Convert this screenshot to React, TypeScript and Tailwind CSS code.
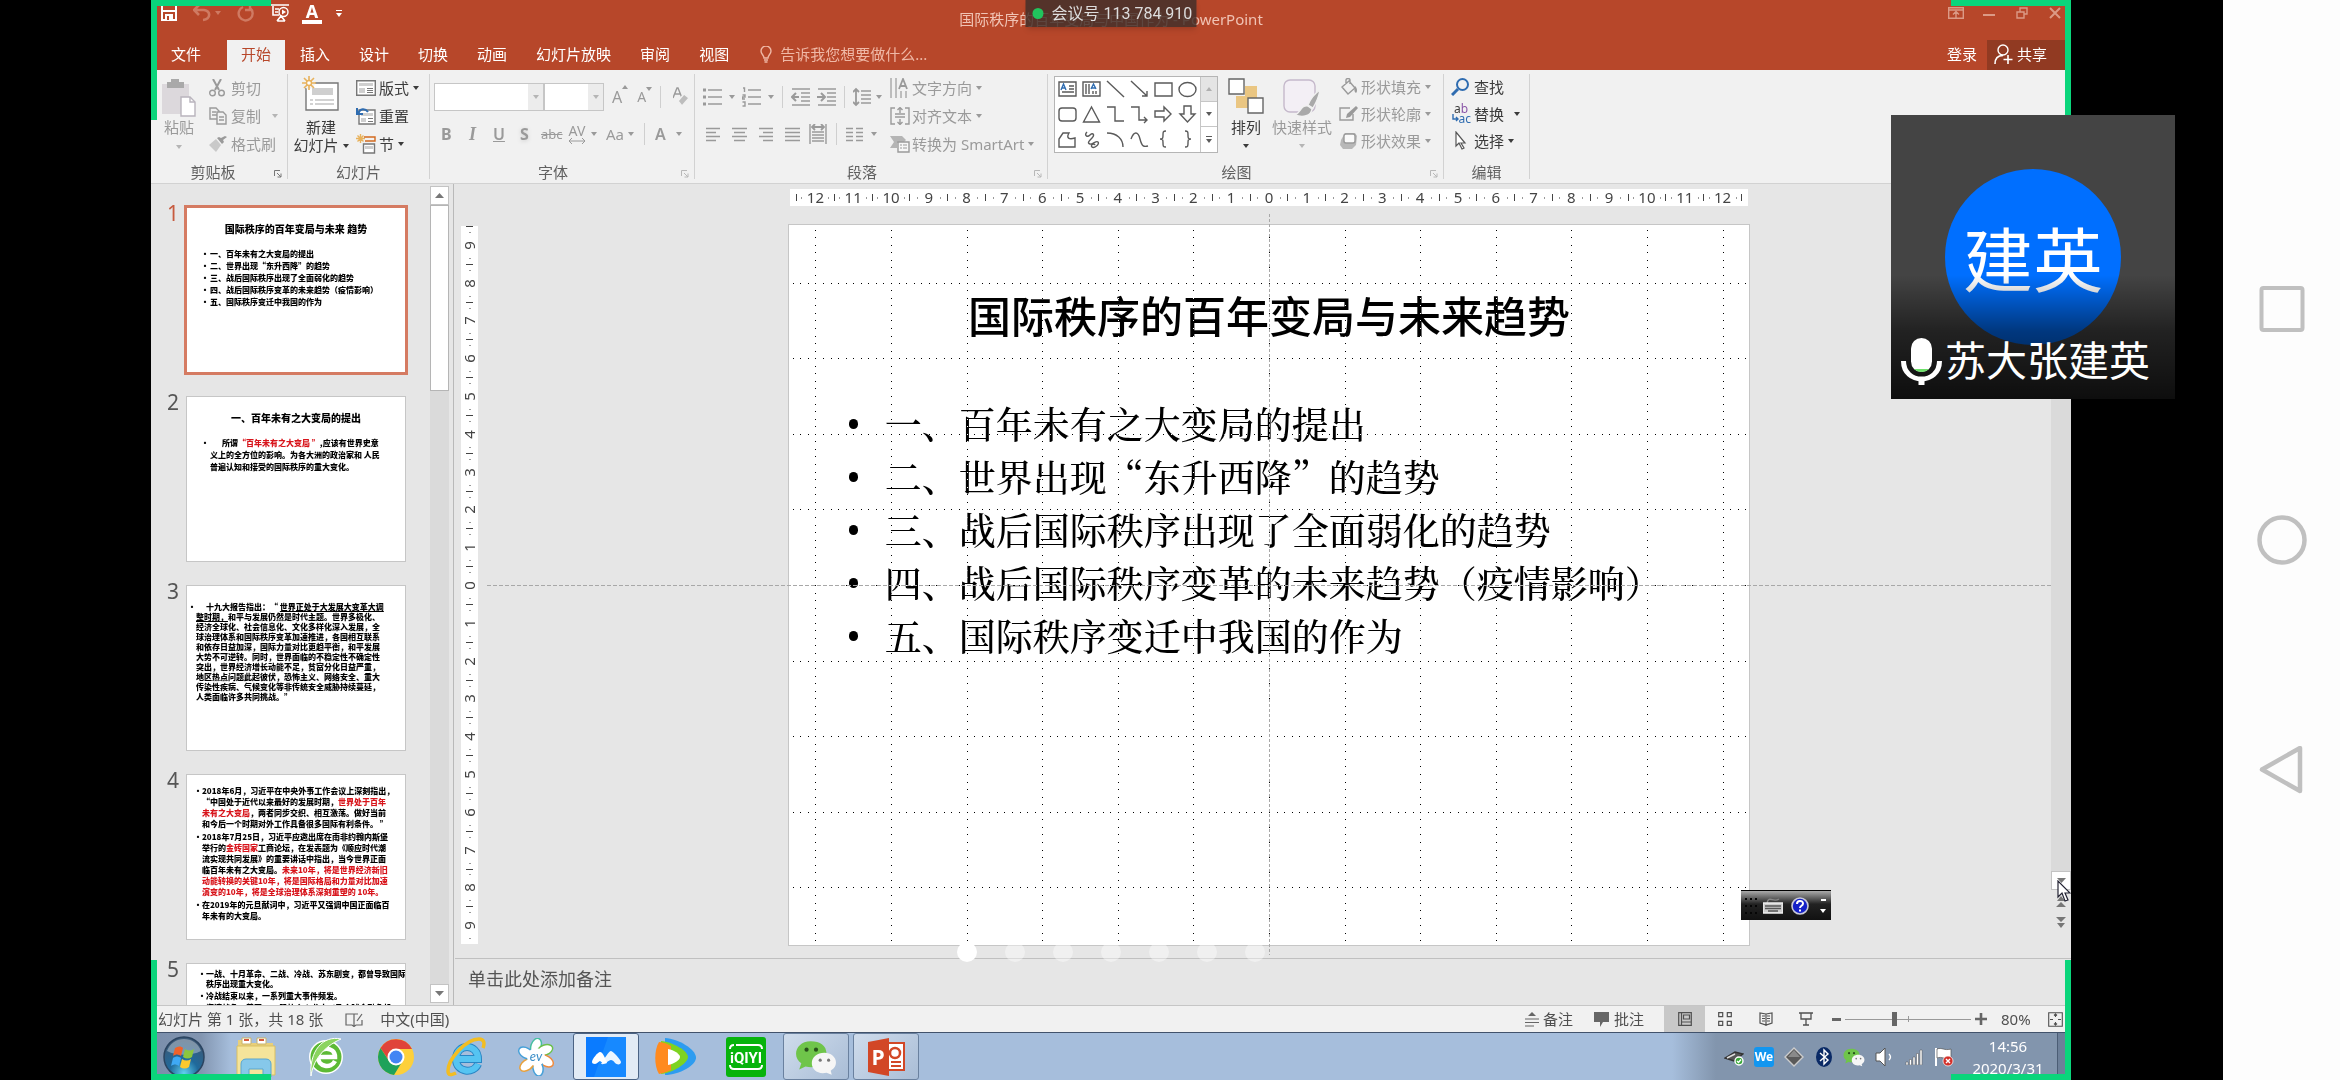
import { type ReactNode, useState } from 'react'

const UI_FONT = "font-['Noto_Sans','Noto_Sans_CJK_SC',sans-serif]"
const CJK_FONT = "font-['Noto_Sans_CJK_SC',sans-serif]"

function Svg({ w, h, className, children }: { w: number; h: number; className?: string; children: ReactNode }) {
  return (
    <svg
      width={w}
      height={h}
      viewBox={`0 0 ${w} ${h}`}
      fill="none"
      stroke="currentColor"
      strokeWidth={1.4}
      className={`shrink-0 ${className ?? ''}`}
      aria-hidden
    >
      {children}
    </svg>
  )
}

function Caret({ className = '' }: { className?: string }) {
  return (
    <Svg w={6} h={4} className={className}>
      <path d="M0 0h6L3 4z" fill="currentColor" stroke="none" />
    </Svg>
  )
}

/* ---------- title bar and tabs ---------- */

function TitleBar() {
  return (
    <div className="grid h-10 grid-cols-[1fr_auto_1fr] text-white">
      <div className="flex h-[26px] items-center pl-[10px]">
        <button aria-label="保存" className="w-4">
          <Svg w={16} h={16}>
            <path d="M1 0v15h14V0M1 6h14" strokeWidth={2} />
            <path d="M4 9h8v6H4z" fill="currentColor" stroke="none" />
            <path d="M6 11h2v4H6z" fill="#B7472A" stroke="none" />
          </Svg>
        </button>
        <button aria-label="撤消" className="ml-4 flex items-center gap-1 text-[#cf7a62]">
          <Svg w={18} h={18}>
            <path d="M6 1 1 6l5 5M1 6h10c7 1 7 9-1 10" strokeWidth={2.6} />
          </Svg>
          <Caret />
        </button>
        <button aria-label="恢复" className="ml-4 text-[#cf7a62]">
          <Svg w={18} h={18}>
            <path d="M6 3a7 7 0 1 0 7 1M13 0v6h-5" strokeWidth={2.4} />
          </Svg>
        </button>
        <button aria-label="从头开始放映" className="ml-4">
          <Svg w={18} h={20}>
            <path d="M0 2h18M2 3v9h6M4 6h4M4 9h3M6 18l4-5 4 5M6 18h8" strokeWidth={1.6} />
            <circle cx="12.5" cy="9" r="4.5" />
            <path d="M11 6.5v5l4-2.5z" fill="currentColor" stroke="none" />
          </Svg>
        </button>
        <button aria-label="字体颜色" className="ml-[13px] flex flex-col items-center">
          <span className="text-lg font-bold leading-[18px]">A</span>
          <span className="h-1 w-5 bg-white" />
        </button>
        <button aria-label="自定义快速访问工具栏" className="ml-[14px] flex flex-col items-center gap-[2px]">
          <span className="h-px w-[6px] bg-white" />
          <Caret />
        </button>
      </div>
      <h1 className="self-center whitespace-nowrap pb-[2px] text-[15px] leading-5 text-[#f0c3b4]">
        国际秩序的百年变局与中国作为 - PowerPoint
      </h1>
      <div className="flex h-[26px] items-center justify-end text-[#db9a86]">
        <button aria-label="功能区显示选项" className="flex w-[33px] justify-center">
          <Svg w={16} h={12}>
            <path d="M.7.7h14.6v10.6H.7zM.7 3h14.6M8 11V5M5 7.500l3-3 3 3" />
          </Svg>
        </button>
        <button aria-label="最小化" className="flex w-[33px] justify-center">
          <Svg w={12} h={12}><path d="M0 8h12" strokeWidth={2} /></Svg>
        </button>
        <button aria-label="还原" className="flex w-[33px] justify-center">
          <Svg w={12} h={12}><path d="M1 5h7v6H1zM4 5V1h7v6H8" /></Svg>
        </button>
        <button aria-label="关闭" className="flex w-[33px] justify-center">
          <Svg w={12} h={12}><path d="m1 1 10 10M11 1 1 11" strokeWidth={2} /></Svg>
        </button>
      </div>
    </div>
  )
}

const TABS = ['文件', '开始', '插入', '设计', '切换', '动画', '幻灯片放映', '审阅', '视图']

function TabRow() {
  const [active, setActive] = useState('开始')
  return (
    <div className="flex h-[30px] items-stretch text-[15px] text-white">
      <nav className="flex gap-px">
        {TABS.map((t) => (
          <button
            key={t}
            onClick={() => setActive(t)}
            className={`px-[14px] pb-[2px] leading-7 ${t === '文件' ? 'ml-[6px] mr-[11px]' : ''} ${
              t === active ? 'bg-[#f1f1f1] text-[#b7472a]' : ''
            }`}
          >
            {t}
          </button>
        ))}
      </nav>
      <label className="ml-[17px] flex items-center gap-2 pb-[2px] text-[#efb8a6]">
        <Svg w={12} h={17}>
          <path d="M4 12c0-3-3-3.500-3-7a5 5 0 0 1 10 0c0 3.500-3 4-3 7zM4 14h4M4.500 16h3" />
        </Svg>
        <input
          placeholder="告诉我您想要做什么..."
          className="w-40 bg-transparent leading-7 outline-none placeholder:text-[#efb8a6]"
        />
      </label>
      <div className="ml-auto flex">
        <button className="px-[10px] pb-[2px] leading-7">登录</button>
        <button className="flex w-[84px] items-center gap-1 bg-[#913a22] pb-[2px] pl-[7px]">
          <Svg w={19} h={20}>
            <circle cx="9" cy="6" r="5" />
            <path d="M1 20c0-6 3-8.500 8-8.500M14 11v9M9.500 15.500h9" strokeWidth={1.6} />
          </Svg>
          <span className="leading-7">共享</span>
        </button>
      </div>
    </div>
  )
}

/* ---------- ribbon ---------- */

function Group({ label, launcher, dim = true, className, children }: {
  label: string
  launcher?: boolean
  dim?: boolean
  className: string
  children: ReactNode
}) {
  return (
    <section className={`my-1 flex shrink-0 flex-col border-r border-[#d2d2d2] ${className}`}>
      <div className="flex h-[84px] shrink-0">{children}</div>
      <div className={`relative shrink-0 text-center leading-7 text-[#606060] ${launcher ? 'pr-[18px]' : ''}`}>
        {label}
        {launcher && (
          <button aria-label={`${label}选项`} className={`absolute right-[5px] top-3 ${dim ? 'text-[#b8b8b8]' : 'text-[#777]'}`}>
            <Svg w={8} h={8}>
              <path d="M.5 6V.5H6M3 3l4 4M7 3.500V7H3.500" strokeWidth={1} />
            </Svg>
          </button>
        )}
      </div>
    </section>
  )
}

function RowButton({ icon, label, caret, className = '' }: {
  icon: ReactNode
  label: string
  caret?: string
  className?: string
}) {
  return (
    <button className={`flex items-center whitespace-nowrap ${className}`}>
      {icon}
      <span className="leading-7">{label}</span>
      {caret && <Caret className={caret} />}
    </button>
  )
}

function Sep() {
  return <span className="h-[22px] w-px shrink-0 bg-[#cfcfcf]" />
}

function Lines({ rows }: { rows: [number, number][] }) {
  return <path d={rows.map(([x, w], i) => `M${x} ${i * 4 + 1.5}h${w}`).join('')} strokeWidth={1.3} />
}

function ClipboardGroup() {
  return (
    <Group label="剪贴板" launcher dim={false} className="w-[137px] pl-[6px] text-[#9a9a9a]">
      <button className="ml-px flex w-[42px] flex-col items-center pt-[5px]">
        <Svg w={36} h={38}>
          <path d="M1 5h27v30H1z" fill="#dcd8dc" stroke="none" />
          <path d="M6 3h4V0h8v3h5v6H6z" fill="#a9a9a9" stroke="none" />
          <path d="M20 18h9l5 5v14H20z" fill="#fff" stroke="#b9b4bd" />
          <path d="M29 18v5h5" stroke="#b9b4bd" />
        </Svg>
        <span className="leading-5">粘贴</span>
        <Caret className="mt-2 text-[#b5b5b5]" />
      </button>
      <div className="ml-[9px] grid grid-rows-3">
        <RowButton
          label="剪切"
          icon={
            <Svg w={16} h={18} className="mr-[6px]">
              <path d="M4 0l6 11M12 0 6 11" strokeWidth={2} />
              <circle cx="3.500" cy="14" r="2.800" />
              <circle cx="12.500" cy="14" r="2.800" />
            </Svg>
          }
        />
        <RowButton
          label="复制"
          caret="ml-[11px] text-[#b5b5b5]"
          icon={
            <Svg w={18} h={18} className="mr-1">
              <path d="M1 1h6l3 3v8H1zM3 5h4M3 8h5" />
              <path d="M8 5h6l3 3v9H8z" fill="#f1f1f1" />
              <path d="M10 10h5M10 13h5" />
            </Svg>
          }
        />
        <RowButton
          label="格式刷"
          icon={
            <Svg w={18} h={16} className="mr-1">
              <path d="m0 9 7-6 5 6-5 7z" fill="#c9c9c9" stroke="none" />
              <path d="m8 2 5 6 2-2-1-2 4-3-2-1-4 2-2-1z" fill="currentColor" stroke="none" />
            </Svg>
          }
        />
      </div>
    </Group>
  )
}

function Burst() {
  return (
    <path d="M7 0v14M0 7h14M2 2l10 10M12 2 2 12" stroke="#e8b25c" strokeWidth={1.6} />
  )
}

function SlidesGroup() {
  return (
    <Group label="幻灯片" className="w-[142px] text-[#3b3b3b]">
      <button className="ml-[5px] flex w-[56px] flex-col items-center pt-[2px]">
        <Svg w={38} h={36}>
          <path d="M4 7h32v27H4z" fill="#fff" stroke="#777" />
          <path d="M10 12h21v7H10z" fill="#cfcfcf" stroke="none" />
          <path d="M8 24h3M13 24h19M8 28h3M13 28h19" stroke="#a5a5a5" strokeWidth={1} />
          <circle cx="7" cy="7" r="6" fill="#f1f1f1" stroke="none" />
          <Burst />
          <circle cx="7" cy="7" r="2.500" fill="#fff" stroke="#e8b25c" />
        </Svg>
        <span className="mt-[6px] leading-[18px]">新建</span>
        <span className="flex items-center gap-1 leading-[19px]">
          幻灯片 <Caret />
        </span>
      </button>
      <div className="ml-[7px] grid grid-rows-3">
        <RowButton
          label="版式"
          caret="ml-1"
          icon={
            <Svg w={20} h={16} className="mr-[3px] text-[#777]">
              <path d="M.7.7h18.600v14.600H.7z" fill="#fff" />
              <path d="M3 3h14v3H3zM3 8h6v5H3z" fill="#cfcfcf" stroke="none" />
              <path d="M11 8.500h6M11 10.500h6M11 12.500h6" strokeWidth={1} />
            </Svg>
          }
        />
        <RowButton
          label="重置"
          icon={
            <Svg w={20} h={18} className="mr-[3px] text-[#777]">
              <path d="M3 3h16v14H3z" fill="#fff" />
              <path d="M5 6h12v3H5zM5 11h5v4H5z" fill="#cfcfcf" stroke="none" />
              <path d="M12 11.500h5M12 14.500h5" strokeWidth={1} />
              <path d="M2 7c2-6 7-6 10-2M1 1v6h6" stroke="#2f6cb0" strokeWidth={2} />
            </Svg>
          }
        />
        <RowButton
          label="节"
          caret="ml-1"
          icon={
            <Svg w={20} h={20} className="mr-[3px]">
              <path d="M4.500 0v9M0 4.500h9M1.500 1.500l6 6M7.500 1.500l-6 6" stroke="#e8b25c" />
              <path d="M8 3h11v4H9" stroke="#d2691e" />
              <path d="M7.500 10h11v9h-11z" fill="#fff" stroke="#777" />
              <path d="M9 12h8v3H9z" fill="#cfcfcf" stroke="none" />
            </Svg>
          }
        />
      </div>
    </Group>
  )
}

function Combo({ label, className }: { label: string; className: string }) {
  return (
    <span className={`relative flex h-7 border border-[#c6c6c6] bg-white ${className}`}>
      <select aria-label={label} className="w-full appearance-none bg-transparent" />
      <span className="pointer-events-none absolute inset-y-0 right-0 flex w-[15px] items-center justify-center bg-[#ececec]">
        <Caret className="text-[#b5b5b5]" />
      </span>
    </span>
  )
}

function FontGroup() {
  return (
    <Group label="字体" launcher className="w-[265px] text-[#9a9a9a]">
      <div className="flex flex-col pl-1 pt-[9px]">
        <div className="flex h-7 items-center">
          <Combo label="字体" className="w-[110px]" />
          <Combo label="字号" className="w-[60px]" />
          <button aria-label="增大字号" className="ml-2 flex items-start leading-6">
            <span className="text-base">A</span>
            <Caret className="rotate-180" />
          </button>
          <button aria-label="减小字号" className="ml-[9px] flex items-start leading-6">
            <span className="text-sm">A</span>
            <Caret />
          </button>
          <span className="ml-[8px] mr-3 flex"><Sep /></span>
          <button aria-label="清除格式">
            <Svg w={16} h={20}>
              <path d="M0 11 4 1h1l4 10M2 7h5" />
              <path d="m5 14 6-7 5 4-7 8z" fill="#bdbdbd" stroke="#f1f1f1" />
            </Svg>
          </button>
        </div>
        <div className="mt-[9px] flex h-7 items-center pl-[7px] text-base leading-6">
          <button className="w-[28px] text-left font-bold">B</button>
          <button className="w-[24px] text-left font-['Liberation_Serif',serif] text-[18px] font-bold italic">I</button>
          <button className="w-[27px] text-left font-semibold underline">U</button>
          <button className="w-[21px] text-left font-bold drop-shadow-sm">S</button>
          <button className="w-[27px] text-left text-[13px] line-through">abc</button>
          <button aria-label="字符间距" className="flex w-[38px] items-center gap-[5px]">
            <span className="flex flex-col items-center">
              <span className="text-sm leading-[14px]">AV</span>
              <Svg w={18} h={6}>
                <path d="M1 3h16M4 0 1 3l3 3M14 0l3 3-3 3" strokeWidth={1} />
              </Svg>
            </span>
            <Caret />
          </button>
          <button className="flex w-[38px] items-center gap-1 text-[15px]">
            Aa <Caret />
          </button>
          <Sep />
          <button className="ml-[10px] flex items-center gap-[10px] font-semibold">
            A <Caret />
          </button>
        </div>
      </div>
    </Group>
  )
}

function ParagraphGroup() {
  return (
    <Group label="段落" launcher className="w-[353px] text-[#9a9a9a]">
      <div className="w-[195px] pl-2 pt-[9px]">
        <div className="flex h-7 items-center">
          <Svg w={19} h={20}>
            <path d="M5 3h14M5 10h14M5 17h14" />
            <path d="M0 3h3M0 10h3M0 17h3" strokeWidth={3} />
          </Svg>
          <Caret className="ml-[7px] mr-[7px]" />
          <Svg w={19} h={20}>
            <path d="M6 3h13M6 10h13M6 17h13M1 1h1.500v4M.5 8h2.500v2H.5v2H3M.5 15h2.500v4H.5" />
          </Svg>
          <Caret className="ml-[7px] mr-2" />
          <Sep />
          <Svg w={19} h={18} className="ml-2">
            <path d="M1 1h18M10 5h9M10 9h9M10 13h9M1 17h18" />
            <path d="M8 9H2M5 5 1 9l4 4" strokeWidth={2} />
          </Svg>
          <Svg w={19} h={18} className="ml-[7px]">
            <path d="M1 1h18M10 5h9M10 9h9M10 13h9M1 17h18" />
            <path d="M0 9h7M4 5l4 4-4 4" strokeWidth={2} />
          </Svg>
          <span className="mx-2 flex"><Sep /></span>
          <Svg w={18} h={20}>
            <path d="M8 4h10M8 8h10M8 12h10M8 16h10" />
            <path d="M3 2v16M0 5l3-3 3 3M0 15l3 3 3-3" strokeWidth={1.8} />
          </Svg>
          <Caret className="ml-[5px]" />
        </div>
        <div className="mt-[9px] flex h-7 items-center gap-3 pl-[3px]">
          <Svg w={14} h={15}><Lines rows={[[0, 14], [0, 10], [0, 14], [0, 10]]} /></Svg>
          <Svg w={15} h={15}><Lines rows={[[0, 15], [2, 11], [0, 15], [2, 11]]} /></Svg>
          <Svg w={14} h={15}><Lines rows={[[0, 14], [4, 10], [0, 14], [4, 10]]} /></Svg>
          <Svg w={15} h={15}><Lines rows={[[0, 15], [0, 15], [0, 15], [0, 15]]} /></Svg>
          <Svg w={18} h={20} className="-mx-[3px]">
            <path d="M1 0v20M17 0v20M3 8h12M3 11h12M3 14h12M3 17h12" />
            <path d="M3 3h12M6 0 3 3l3 3M12 0l3 3-3 3" strokeWidth={1.8} />
          </Svg>
          <span className="-mr-[3px] flex"><Sep /></span>
          <Svg w={17} h={15}>
            <path d="M0 1.500h7M10 1.500h7M0 5.500h7M10 5.500h7M0 9.500h7M10 9.500h7M0 13.500h7M10 13.500h7" />
          </Svg>
          <Caret className="-ml-1" />
        </div>
      </div>
      <div className="grid grid-rows-3">
        <RowButton
          label="文字方向"
          caret="ml-1"
          icon={
            <Svg w={18} h={20} className="mr-1">
              <path d="M1 0v20M6 0v20M11 13v7M16 13v7" strokeWidth={1.2} />
              <path d="m9 11 4-10 4 10M10.500 8h5" strokeWidth={1.800} />
            </Svg>
          }
        />
        <RowButton
          label="对齐文本"
          caret="ml-1"
          icon={
            <Svg w={20} h={18} className="mr-[2px]">
              <path d="M5 1H1v16h4M15 1h4v16h-4M5 7h10M5 10h10" />
              <path d="M10 0v6M7.500 3 10 .5 12.500 3M10 18v-6M7.500 15l2.500 2.500 2.500-2.500" />
            </Svg>
          }
        />
        <RowButton
          label="转换为 SmartArt"
          caret="ml-1"
          icon={
            <Svg w={20} h={18} className="mr-[2px]">
              <path d="M0 1h12l4 4-3 3H7v5H0l4-6z" fill="#b5b5b5" stroke="none" />
              <path d="M8 7h11v10H8z" fill="#f7f7f7" />
              <path d="M10 10h2M13 10h4M10 13h2M13 13h4" strokeWidth={1} />
            </Svg>
          }
        />
      </div>
    </Group>
  )
}

const SHAPES: ReactNode[] = [
  <><path d="M1 2h17v14H1zM11 6h5M11 9h5M4 12h12" /><path d="m3 10 2.500-6L8 10M4 8h3" stroke="#2f6cb0" /></>,
  <><path d="M1 2h17v14H1zM4 4v10M7 4v10M11 11v3M14 11v3" /><path d="m9 9 2.500-5L14 9M10 8h3" stroke="#2f6cb0" /></>,
  <path d="m1 1 17 16" />,
  <path d="m1 1 16 15M17 11v5h-5" />,
  <path d="M1 3h17v13H1z" />,
  <ellipse cx="9.500" cy="9.500" rx="8.500" ry="7" />,
  <rect x="1" y="3" width="17" height="13" rx="3" />,
  <path d="M9.500 2 1.500 17h16z" />,
  <path d="M1 2h8v14h9" />,
  <path d="M1 2h8v13h8M14 12l3 3-3 3" />,
  <path d="M1 6h9V2l7 7-7 7v-4H1z" />,
  <path d="M6 1h7v8h4l-7.500 8L2 9h4z" />,
  <path d="M5 3h6c-3 5 0 7 6 5v9H1V9z" />,
  <path d="M5 2c-3 3 0 6 3 3s5 0 2 3-5 5-2 6 6-4 8-2-4 7-6 5 2-4 3-2" />,
  <path d="M1 3c10 0 16 6 16 14" />,
  <path d="M1 9c3-8 7-8 9 0s4 8 8 7" />,
  <path d="M12 1c-3 0-3 1-3 4s0 4-3 4c3 0 3 1 3 4s0 4 3 4" />,
  <path d="M7 1c3 0 3 1 3 4s0 4 3 4c-3 0-3 1-3 4s0 4-3 4" />,
]

function DrawingGroup() {
  return (
    <Group label="绘图" launcher className="w-[396px] text-[#9a9a9a]">
      <div className="ml-[6px] mt-[2px] flex h-[77px] w-[164px] border border-[#b5b5b5] bg-white text-[#5a5a5a]">
        <div className="grid flex-1 grid-cols-6 grid-rows-3 place-items-center">
          {SHAPES.map((s, i) => (
            <Svg key={i} w={19} h={19}>{s}</Svg>
          ))}
        </div>
        <div className="grid w-[17px] grid-rows-3 divide-y divide-[#c6c6c6] border-l border-[#c6c6c6]">
          <button aria-label="上一行" className="flex items-center justify-center bg-[#e4e4e4] text-[#b0b0b0]">
            <Caret className="rotate-180" />
          </button>
          <button aria-label="下一行" className="flex items-center justify-center"><Caret /></button>
          <button aria-label="其他" className="flex flex-col items-center justify-center gap-[2px]">
            <span className="h-px w-[6px] bg-[#5a5a5a]" />
            <Caret />
          </button>
        </div>
      </div>
      <button className="ml-[9px] flex w-[38px] flex-col items-center pt-1 text-[#3b3b3b]">
        <Svg w={36} h={36}>
          <path d="M17 8h12v12H17zM8 18h12v12H8z" fill="#eac682" stroke="none" />
          <path d="M1 1h15v15H1zM20 20h15v15H20z" fill="#fff" stroke="#666" />
        </Svg>
        <span className="mt-1 whitespace-nowrap leading-[18px]">排列</span>
        <Caret className="mt-2" />
      </button>
      <button className="ml-[6px] flex w-[62px] flex-col items-center pt-[5px]">
        <Svg w={38} h={39}>
          <rect x="1" y="1" width="31" height="32" rx="6" fill="#f3eff5" stroke="#c5b9cb" />
          <path d="M37 11c-6 4-10 10-12 15l5 3c3-5 6-12 7-18z" fill="#a9a9a9" stroke="#f1f1f1" />
          <path d="M25 27c-8-1-7 7-13 9 8 3 16 1 17-6z" fill="#a9a9a9" stroke="#f1f1f1" />
        </Svg>
        <span className="leading-[18px]">快速样式</span>
        <Caret className="mt-2 text-[#b5b5b5]" />
      </button>
      <div className="ml-[6px] grid h-[80px] grid-rows-3">
        <RowButton
          label="形状填充"
          caret="ml-1"
          icon={
            <Svg w={19} h={18} className="mr-[3px]">
              <path d="m3 9 7-6 6 7-7 6zM7 6V2c0-2 4-2 4 0v4" />
              <path d="M16 8c3 3 2 6 1 7-2-1-2-4-1-7z" fill="currentColor" stroke="none" />
            </Svg>
          }
        />
        <RowButton
          label="形状轮廓"
          caret="ml-1"
          icon={
            <Svg w={19} h={18} className="mr-[3px]">
              <path d="M11 3H1v12h13V9" />
              <path d="m7 13 1-4 9-8 2 2-8 9z" fill="currentColor" stroke="none" />
            </Svg>
          }
        />
        <RowButton
          label="形状效果"
          caret="ml-1"
          icon={
            <Svg w={19} h={18} className="mr-[3px]">
              <path d="M6 1h10l2 3-1 9-4 4H4l-3-4 1-5z" fill="#b8b8b8" stroke="none" />
              <rect x="5" y="2" width="11" height="9" rx="2" fill="#fafafa" />
            </Svg>
          }
        />
      </div>
    </Group>
  )
}

function EditingGroup() {
  return (
    <Group label="编辑" className="w-[86px] text-[#3b3b3b]">
      <div className="ml-[7px] grid h-[80px] grid-rows-3">
        <RowButton
          label="查找"
          icon={
            <Svg w={18} h={18} className="mr-[5px] text-[#2f6cb0]">
              <circle cx="11.500" cy="6.500" r="5.500" strokeWidth={2} />
              <path d="m7 11-6 6" strokeWidth={3} />
            </Svg>
          }
        />
        <RowButton
          label="替换"
          caret="ml-[10px]"
          icon={
            <span className="mr-[3px] flex w-5 flex-col text-[12px] leading-[10px]">
              <span>a<b className="font-normal text-[#8a55a8]">b</b></span>
              <span className="flex justify-end text-[#2f6cb0]"><Svg w={7} h={8}><path d="M1 0v5h5M4 3l2 2-2 2" /></Svg>ac</span>
            </span>
          }
        />
        <RowButton
          label="选择"
          caret="ml-1"
          icon={
            <Svg w={18} h={19} className="mr-[5px] text-[#555]">
              <path d="M5 1v14l3-3 3 6 2-1-3-5h4z" fill="#fff" strokeWidth={1.2} />
            </Svg>
          }
        />
      </div>
    </Group>
  )
}

function Ribbon() {
  return (
    <div className="flex h-[114px] overflow-hidden border-b border-[#d2d2d2] bg-[#f1f1f1] text-[15px]">
      <ClipboardGroup />
      <SlidesGroup />
      <FontGroup />
      <ParagraphGroup />
      <DrawingGroup />
      <EditingGroup />
    </div>
  )
}

/* ---------- thumbnails ---------- */

interface Thumb {
  title?: string
  box: string
  item: string
  bullets: ReactNode[][]
}

const red = (s: string) => <span className="text-[#d8141b]">{s}</span>

const OUTLINE = [
  '一、百年未有之大变局的提出',
  '二、世界出现“东升西降”的趋势',
  '三、战后国际秩序出现了全面弱化的趋势',
  '四、战后国际秩序变革的未来趋势（疫情影响）',
  '五、国际秩序变迁中我国的作为',
]

const THUMBS: Thumb[] = [
  {
    title: '国际秩序的百年变局与未来 趋势',
    box: 'pt-[14px] leading-[12px]',
    item: 'pl-[14px] gap-[7px]',
    bullets: OUTLINE.map((t) => [t]),
  },
  {
    title: '一、百年未有之大变局的提出',
    box: 'pt-[14px] leading-[12px]',
    item: 'pl-[14px] gap-[7px]',
    bullets: [[
      <span className="pl-3">所谓{red('“百年未有之大变局 ”')},应该有世界史意</span>,
      '义上的全方位的影响。为各大洲的政治家和 人民',
      '普遍认知和接受的国际秩序的重大变化。',
    ]],
  },
  {
    box: 'pt-4 leading-[10px]',
    item: 'pl-px gap-[6px]',
    bullets: [[
      <span className="pl-[10px]">十九大报告指出：“ <u>世界正处于大发展大变革大调</u></span>,
      <><u>整时期，</u>和平与发展仍然是时代主题。世界多极化、</>,
      '经济全球化、社会信息化、文化多样化深入发展，全',
      '球治理体系和国际秩序变革加速推进，各国相互联系',
      '和依存日益加深，国际力量对比更趋平衡，和平发展',
      '大势不可逆转。同时，世界面临的不稳定性不确定性',
      '突出，世界经济增长动能不足，贫富分化日益严重，',
      '地区热点问题此起彼伏，恐怖主义、网络安全、重大',
      '传染性疾病、气候变化等非传统安全威胁持续蔓延，',
      '人类面临许多共同挑战。”',
    ]],
  },
  {
    box: 'pt-[10px] leading-[11px]',
    item: 'pl-[7px] gap-[6px] mb-[2px]',
    bullets: [
      [
        '2018年6月，习近平在中央外事工作会议上深刻指出，',
        <>“中国处于近代以来最好的发展时期，{red('世界处于百年')}</>,
        <>{red('未有之大变局')}，两者同步交织、相互激荡。做好当前</>,
        '和今后一个时期对外工作具备很多国际有利条件。 ”',
      ],
      [
        '2018年7月25日，习近平应邀出席在南非约翰内斯堡',
        <>举行的{red('金砖国家')}工商论坛，在发表题为《顺应时代潮</>,
        '流实现共同发展》的重要讲话中指出，当今世界正面',
        <>临百年未有之大变局。{red('未来10年，将是世界经济新旧')}</>,
        red('动能转换的关键10年，将是国际格局和力量对比加速'),
        red('演变的10年，将是全球治理体系深刻重塑的 10年。'),
      ],
      ['在2019年的元旦献词中，习近平又强调中国正面临百', '年未有的大变局。'],
    ],
  },
  {
    box: 'pt-[5px] leading-[10px]',
    item: 'pl-[11px] gap-[6px] mb-[2px]',
    bullets: [
      ['一战、十月革命、二战、冷战、苏东剧变，都曾导致国际', '秩序出现重大变化。'],
      ['冷战结束以来，一系列重大事件频发。'],
      ['海湾战争、美国9.11恐怖主义袭击以及全球金融危机、'],
    ],
  },
]

function SlideThumb({ thumb, index, active, onSelect }: {
  thumb: Thumb
  index: number
  active: boolean
  onSelect: () => void
}) {
  return (
    <li className="flex items-start">
      <span className={`w-[33px] pl-[16px] text-[21px] leading-[17px] ${active ? 'text-[#c75b3f]' : 'text-[#555]'}`}>
        {index + 1}
      </span>
      <button
        onClick={onSelect}
        className={`h-[170px] w-56 shrink-0 text-left ${active ? 'bg-[#d57b62] p-[3px]' : 'p-[2px]'}`}
      >
        <div
          className={`h-full overflow-hidden whitespace-nowrap bg-white text-[8px] font-black text-black ${CJK_FONT} ${
            active ? '' : 'border border-[#c6c6c6]'
          } ${thumb.box}`}
        >
          {thumb.title && <p className="mb-3 text-center text-[10px] leading-[14px]">{thumb.title}</p>}
          {thumb.bullets.map((lines, i) => (
            <div key={i} className={`flex ${thumb.item}`}>
              <span className="w-[2px]">·</span>
              <div>
                {lines.map((l, j) => (
                  <p key={j}>{l}</p>
                ))}
              </div>
            </div>
          ))}
        </div>
      </button>
    </li>
  )
}

function ScrollButton({ label, up }: { label: string; up?: boolean }) {
  return (
    <button aria-label={label} className="flex h-[19px] w-full shrink-0 items-center justify-center border border-[#c3c3c3] bg-white text-[#777]">
      <Svg w={9} h={5} className={up ? 'rotate-180' : ''}>
        <path d="M0 0h9L4.500 5z" fill="currentColor" stroke="none" />
      </Svg>
    </button>
  )
}

function ThumbPanel() {
  const [selected, setSelected] = useState(0)
  return (
    <aside className="flex w-[303px] shrink-0 border-r border-[#b9b9b9]">
      <ol className="flex flex-1 flex-col gap-[19px] overflow-hidden pt-[21px]">
        {THUMBS.map((t, i) => (
          <SlideThumb key={i} thumb={t} index={i} active={i === selected} onSelect={() => setSelected(i)} />
        ))}
      </ol>
      <div className="mb-[2px] mr-1 mt-[2px] flex w-[19px] flex-col bg-[#dadada]">
        <ScrollButton label="向上滚动" up />
        <div className="h-[186px] border border-[#b5b5b5] bg-white" />
        <div className="flex-1" />
        <ScrollButton label="向下滚动" />
      </div>
    </aside>
  )
}

/* ---------- slide editor ---------- */

const units = (n: number) => Array.from({ length: n * 2 + 1 }, (_, i) => Math.abs(i - n))

function HorizontalRuler() {
  return (
    <div className="flex h-[17px] w-[958px] shrink-0 items-center bg-white px-[6px] text-[15px] leading-[17px] text-[#444]">
      {units(12).map((n, i) => (
        <div key={i} className="flex flex-1 basis-0 items-center justify-between">
          <span className="h-[7px] w-px bg-[#444]" />
          <span className="h-[2px] w-px bg-[#999]" />
          <span>{n}</span>
          <span className="h-[2px] w-px bg-[#999]" />
          <span className="w-0" />
        </div>
      ))}
      <span className="h-[7px] w-px bg-[#444]" />
    </div>
  )
}

function VerticalRuler() {
  return (
    <div className="mb-[14px] ml-[7px] mt-[42px] flex w-[17px] shrink-0 flex-col bg-white text-[15px] text-[#444]">
      {units(9).map((n, i) => (
        <div key={i} className="flex flex-1 basis-0 flex-col items-center justify-between">
          <span className="h-px w-[7px] bg-[#444]" />
          <span className="h-px w-[2px] bg-[#999]" />
          <span className="-rotate-90 leading-[15px]">{n}</span>
          <span className="h-px w-[2px] bg-[#999]" />
          <span className="h-0" />
        </div>
      ))}
    </div>
  )
}

// Drawing grid: lines every 2 cm, dots every 2 mm, measured from the slide centre.
const CM = 37.8
const DOT = CM / 5

function gridPath(): string {
  const parts: string[] = []
  const dot = (x: number, y: number) => parts.push(`M${Math.round(x)} ${Math.round(y)}h1v1h-1z`)
  for (let k = -6; k <= 6; k++) {
    for (let j = -47; j <= 47; j++) dot(480 + k * CM * 2, 360 + j * DOT)
  }
  for (let k = -4; k <= 4; k++) {
    for (let j = -63; j <= 63; j++) dot(480 + j * DOT, 360 + k * CM * 2)
  }
  return parts.join('')
}

function Slide() {
  return (
    <article className={`relative aspect-[4/3] h-full border border-[#c6c6c6] bg-white text-black ${CJK_FONT}`}>
      <h2 className="pt-[67px] text-center text-[43px] font-medium leading-[44px]">国际秩序的百年变局与未来趋势</h2>
      <ul className="mt-[61px] font-['Noto_Serif_CJK_SC','Noto_Sans_CJK_SC',serif] text-[37px] font-medium leading-[53px]">
        {OUTLINE.map((t) => (
          <li key={t} className="flex items-center gap-[27px] whitespace-nowrap pl-[60px]">
            <span className="h-[10px] w-[9px] rounded-full bg-black" />
            {t}
          </li>
        ))}
      </ul>
      <svg viewBox="0 0 960 720" className="absolute inset-0 h-full w-full mix-blend-difference" aria-hidden>
        <path d={gridPath()} fill="#fff" shapeRendering="crispEdges" />
      </svg>
    </article>
  )
}

function Editor() {
  return (
    <div className="flex min-h-0 flex-1">
      <VerticalRuler />
      <div className="ml-[9px] flex min-w-0 flex-1 flex-col items-center pt-[5px]">
        <HorizontalRuler />
        <div className="relative mb-3 mt-[18px] flex min-h-0 w-full flex-1 justify-center">
          <Slide />
          <div className="absolute inset-x-0 top-1/2 h-px bg-[repeating-linear-gradient(90deg,#a8a8a8_0_4px,transparent_4px_6px)]" />
          <div className="absolute -bottom-[9px] -top-[10px] left-1/2 w-px bg-[repeating-linear-gradient(180deg,#a8a8a8_0_3px,transparent_3px_5px)]" />
        </div>
      </div>
      <div className="mt-[2px] flex w-5 shrink-0 flex-col items-center">
        <div className="w-full flex-1 bg-[#dadada]" />
        <ScrollButton label="向下滚动" />
        <button aria-label="上一张幻灯片" className="mt-[6px] text-[#777]">
          <Svg w={10} h={11}>
            <path d="M5 0l4 5H1zM5 6l5 5H0z" fill="currentColor" stroke="none" />
          </Svg>
        </button>
        <button aria-label="下一张幻灯片" className="mb-[30px] mt-[10px] text-[#777]">
          <Svg w={10} h={11}>
            <path d="M0 0h10L5 5zM1 6h8l-4 5z" fill="currentColor" stroke="none" />
          </Svg>
        </button>
      </div>
    </div>
  )
}

/* ---------- status bar ---------- */

function StatusBar() {
  return (
    <footer className="flex h-[27px] shrink-0 items-center border-t border-[#c6c6c6] bg-[#f1f1f1] pl-[7px] text-[15px] leading-6 text-[#505050]">
      <span>幻灯片 第 1 张，共 18 张</span>
      <Svg w={18} h={15} className="ml-[22px] text-[#666]">
        <path d="M9 2v12M9 2H1v11h6l2 1.500 2-1.500h6V8M9 2h4M12 9l5-7" strokeWidth={1.2} />
      </Svg>
      <span className="ml-[17px]">中文(中国)</span>
      <div className="ml-auto flex h-full items-center">
        <button className="flex items-center gap-1">
          <Svg w={14} h={15} className="text-[#666]">
            <path d="M0 7h14M0 10.500h14M0 14h9" strokeWidth={1.2} />
            <path d="M7 0l4 4H3z" fill="currentColor" stroke="none" />
          </Svg>
          备注
        </button>
        <button className="ml-[21px] flex items-center gap-[5px]">
          <Svg w={15} h={15} className="text-[#666]">
            <path d="M0 0h15v10H9l-3 5v-5H0z" fill="currentColor" stroke="none" />
          </Svg>
          批注
        </button>
        <button aria-label="普通视图" className="ml-5 flex h-full w-[41px] items-center justify-center bg-[#c8c8c8]">
          <Svg w={14} h={14}>
            <path d="M.7.7h12.600v12.600H.7zM3.500.7v12.600M5.500 3h6v4h-6zM3.500 10h10" strokeWidth={1.2} />
          </Svg>
        </button>
        <button aria-label="幻灯片浏览" className="flex w-[40px] justify-center">
          <Svg w={14} h={14}>
            <path d="M.7.7h4v4h-4zM9.300.7h4v4h-4zM.7 9.300h4v4h-4zM9.300 9.300h4v4h-4z" strokeWidth={1.2} />
          </Svg>
        </button>
        <button aria-label="阅读视图" className="flex w-[41px] justify-center">
          <Svg w={14} h={14}>
            <path d="M7 2v12M7 2 1 1v10l6 2 6-2V1zM3 4h3M3 6.500h3M3 9h3M8 4h3M8 6.500h3M8 9h3" strokeWidth={1.2} />
          </Svg>
        </button>
        <button aria-label="幻灯片放映" className="flex w-[40px] justify-center">
          <Svg w={14} h={14}>
            <path d="M0 1h14M2 1v6h10V1M7 7v6M4 13h6" strokeWidth={1.3} />
          </Svg>
        </button>
        <button aria-label="缩小" className="ml-[6px] h-[3px] w-[9px] bg-[#666]" />
        <span className="relative ml-1 flex w-[126px] items-center">
          <input
            type="range"
            aria-label="显示比例"
            min={0}
            max={100}
            defaultValue={39}
            className="h-px w-full appearance-none bg-[#999] [&::-webkit-slider-thumb]:h-[14px] [&::-webkit-slider-thumb]:w-[5px] [&::-webkit-slider-thumb]:appearance-none [&::-webkit-slider-thumb]:bg-[#666]"
          />
          <span className="absolute left-1/2 h-[6px] w-px bg-[#999]" />
        </span>
        <button aria-label="放大" className="ml-1">
          <Svg w={12} h={12}><path d="M0 6h12M6 0v12" strokeWidth={2.6} stroke="#666" /></Svg>
        </button>
        <span className="ml-[14px] w-[34px]">80%</span>
        <button aria-label="使幻灯片适应当前窗口" className="ml-[13px] mr-2">
          <Svg w={15} h={15}>
            <path d="M.7.7h13.600v13.600H.7zM7.500 2v3M7.500 10v3M2 7.500h3M10 7.500h3M6 3.500 7.500 2 9 3.500M6 11.500 7.500 13 9 11.500" strokeWidth={1.1} />
          </Svg>
        </button>
      </div>
    </footer>
  )
}

/* ---------- taskbar ---------- */

function StartOrb() {
  return (
    <svg width="42" height="42" viewBox="0 0 42 42" aria-hidden>
      <defs>
        <radialGradient id="orb" cx="50%" cy="90%" r="80%">
          <stop offset="0" stopColor="#5fd0f0" />
          <stop offset=".45" stopColor="#1f6a9c" />
          <stop offset="1" stopColor="#3c5a78" />
        </radialGradient>
      </defs>
      <circle cx="21" cy="21" r="20" fill="url(#orb)" stroke="#2b4460" strokeWidth="1.500" />
      <path d="M4 15a18 18 0 0 1 34 0c-10 5-24 5-34 0z" fill="#fff" opacity=".35" />
      <path d="M12 12c3-2 6-2 8 0l-2 8c-3-2-5-2-8 0z" fill="#f0622a" />
      <path d="M22 13c3 2 6 2 9 0l-2 8c-3 2-6 2-9 0z" fill="#8cc63e" />
      <path d="M10 22c3-2 5-2 8 0l-2 8c-3-2-5-2-8 0z" fill="#3fa9f5" />
      <path d="M19 23c3 2 6 2 9 0l-2 8c-3 2-6 2-9 0z" fill="#fcc92e" />
    </svg>
  )
}

const FolderIcon = (
  <svg width="42" height="40" viewBox="0 0 42 40" aria-hidden>
    <path d="M3 3h10l3 3h22v30H3z" fill="#e8cf7a" />
    <path d="M7 1h9v6H7zM22 1h9v6h-9z" fill="#fff" stroke="#c9b36a" />
    <path d="M9 3h5M24 3h5" stroke="#d65a3a" strokeWidth="2" />
    <path d="M2 9h38v29H2z" fill="#f5e49a" stroke="#d9bf62" />
    <path d="M6 40V27c0-3 2-5 5-5h20c3 0 5 2 5 5v13h-8v-8H14v8z" fill="#86c8ea" stroke="#5ba6cf" />
  </svg>
)

const GreenEIcon = (
  <svg width="38" height="40" viewBox="0 0 38 40" aria-hidden>
    <circle cx="19" cy="20" r="17" fill="#fff" />
    <circle cx="19" cy="20" r="15.500" fill="#5cba35" />
    <path d="M11 20h17c0-11-17-11-17 0 0 10 13 12 17 4" fill="none" stroke="#fff" strokeWidth="4.500" />
    <path d="M34 2C16-2 2 14 4 39c2-15 12-29 30-37z" fill="#8bd45f" stroke="#fff" />
  </svg>
)

const ChromeIcon = (
  <svg width="38" height="38" viewBox="0 0 38 38" aria-hidden>
    <circle cx="19" cy="19" r="18" fill="#fdd03b" />
    <path d="M3.500 10A18 18 0 0 1 35 11H19a8 8 0 0 0-7.500 11z" fill="#e0443a" />
    <path d="M3.500 10A18 18 0 0 0 17 37l8-13a8 8 0 0 1-13-1z" fill="#1ea25a" />
    <circle cx="19" cy="19" r="8.500" fill="#fff" />
    <circle cx="19" cy="19" r="6.500" fill="#4285f4" />
  </svg>
)

const IeIcon = (
  <svg width="40" height="40" viewBox="0 0 40 40" aria-hidden>
    <path d="M10 22h22c0-16-22-16-22 0 0 14 18 15 22 5" fill="none" stroke="#2a86c4" strokeWidth="8" />
    <path d="M10 22h22c0-16-22-16-22 0 0 14 18 15 22 5" fill="none" stroke="#55c4f2" strokeWidth="6" />
    <path d="M37 11c2-5 1-9-4-9C20 2 2 22 2 34c0 5 4 4 8 2" fill="none" stroke="#f2bd22" strokeWidth="3.500" />
  </svg>
)

const EvIcon = (
  <svg width="38" height="38" viewBox="0 0 38 38" aria-hidden>
    <g fill="#fff" strokeWidth="1.500">
      <ellipse cx="19" cy="8" rx="5" ry="8" stroke="#47bfa0" transform="rotate(20 19 8)" />
      <ellipse cx="28" cy="12" rx="5" ry="8" stroke="#6bc04b" transform="rotate(70 28 12)" />
      <ellipse cx="29" cy="23" rx="5" ry="8" stroke="#f08a3c" transform="rotate(120 29 23)" />
      <ellipse cx="21" cy="30" rx="5" ry="8" stroke="#47a0d8" transform="rotate(-10 21 30)" />
      <ellipse cx="10" cy="27" rx="5" ry="8" stroke="#e9a13b" transform="rotate(55 10 27)" />
      <ellipse cx="9" cy="15" rx="5" ry="8" stroke="#47a0d8" transform="rotate(-60 9 15)" />
    </g>
    <circle cx="19" cy="19" r="9" fill="#fff" />
    <text x="19" y="23" textAnchor="middle" fontSize="13" fontStyle="italic" fontFamily="Lato" fill="#3c8fc9">ev</text>
  </svg>
)

const MeetingIcon = (
  <svg width="40" height="40" viewBox="0 0 40 40" aria-hidden>
    <path d="M0 0h40v40H0z" fill="#0a7bff" />
    <path d="M22 0h18v40H8z" fill="#1f93ff" opacity=".6" />
    <path d="M6 25c0-3 6-10 8-10 3 0 5 6 7 11-4 2-6-2-7-2s-3 3-5 3-3-1-3-2z" fill="#fff" />
    <path d="M15 27c3-5 8-13 10-13s10 9 10 11c0 3-4 3-6 1-1-2-3-3-4-3-3 0-5 5-10 4z" fill="#fff" opacity=".92" />
  </svg>
)

const VideoIcon = (
  <svg width="42" height="40" viewBox="0 0 42 40" aria-hidden>
    <path d="M10 1C24 2 40 12 41 20S24 38 10 38z" fill="#2d9cf0" />
    <path d="M6 4C18 5 33 14 33 20S18 36 6 37z" fill="#7ed321" />
    <path d="M4 5c-5 8-5 24 0 32 6-1 12-4 12-4V9S10 5 4 5z" fill="#ff8a1f" />
    <path d="M13 12c6 1 12 5 12 8s-6 7-12 8z" fill="#fff" />
  </svg>
)

const IqiyiIcon = (
  <svg width="40" height="40" viewBox="0 0 40 40" aria-hidden>
    <rect width="40" height="40" rx="3" fill="#07b30c" />
    <path d="M10 8h22c3 0 4 1 4 4M36 28c0 3-1 4-4 4H8c-3 0-4-1-4-4M4 12c0-3 1-4 4-4" fill="none" stroke="#fff" strokeWidth="2" />
    <text x="20" y="26" textAnchor="middle" fontSize="15" fontWeight="700" fontFamily="Roboto" fill="#fff">iQIYI</text>
  </svg>
)

function WechatIcon({ size }: { size: number }) {
  return (
    <svg width={size} height={size} viewBox="0 0 40 40" aria-hidden>
      <path d="M15 5C6 5 1 11 1 17c0 4 2 7 5 9l-2 6 6-3c12 3 20-4 20-12S24 5 15 5z" fill="#6fc54a" />
      <circle cx="11" cy="13" r="2" fill="#28511b" />
      <circle cx="20" cy="13" r="2" fill="#28511b" />
      <path d="M28 16c-7 0-12 4-12 10s6 11 14 9l5 2-1-4c3-2 5-4 5-8 0-5-5-9-11-9z" fill="#f6f6f6" />
      <circle cx="24" cy="23" r="1.500" fill="#777" />
      <circle cx="32" cy="23" r="1.500" fill="#777" />
    </svg>
  )
}

const PptIcon = (
  <svg width="38" height="38" viewBox="0 0 38 38" aria-hidden>
    <path d="M20 5h17v27H20z" fill="#fff" stroke="#d24726" strokeWidth="2" />
    <path d="M24 24h10M24 28h10" stroke="#d24726" strokeWidth="2" />
    <circle cx="28" cy="15" r="5" fill="none" stroke="#d24726" strokeWidth="2.500" />
    <path d="M1 4 22 0v38L1 34z" fill="#d24726" />
    <text x="11" y="27" textAnchor="middle" fontSize="21" fontWeight="700" fontFamily="Open Sans" fill="#fff">P</text>
  </svg>
)

const APPS = [
  { name: '资源管理器', icon: FolderIcon },
  { name: '360浏览器', icon: GreenEIcon },
  { name: 'Chrome', icon: ChromeIcon },
  { name: 'Internet Explorer', icon: IeIcon },
  { name: 'EV录屏', icon: EvIcon },
  { name: '腾讯会议', icon: MeetingIcon, state: 'front' },
  { name: '腾讯视频', icon: VideoIcon },
  { name: '爱奇艺', icon: IqiyiIcon },
  { name: '微信', icon: <WechatIcon size={42} />, state: 'open' },
  { name: 'PowerPoint', icon: PptIcon, state: 'open' },
]

function Tray() {
  return (
    <div className="ml-auto flex items-center bg-[linear-gradient(90deg,transparent,#8295ad_44px)] pl-[47px] text-white">
      <div className="grid auto-cols-[30px] grid-flow-col place-items-center">
        <Svg w={20} h={18}>
          <path d="m1 10 10-6 8 2-9 7z" fill="#555" stroke="#333" />
          <path d="m3 10 8-4" stroke="#ddd" />
          <circle cx="15" cy="13" r="4" fill="#3aa83a" stroke="#fff" />
          <path d="m13 13 1.500 1.500L17 11.500" />
        </Svg>
        <span className="flex h-5 w-5 items-center justify-center rounded-[3px] bg-[#1296f0] text-[12px] font-bold leading-5">We</span>
        <Svg w={20} h={20}>
          <path d="M10 1l9 9-9 9-9-9z" fill="#5a5a5a" stroke="#ccc" />
          <path d="M10 3l6 7H4z" fill="#8a8a8a" stroke="none" />
        </Svg>
        <Svg w={16} h={20}>
          <ellipse cx="8" cy="10" rx="8" ry="10" fill="#0a2a66" stroke="none" />
          <path d="m4 6 8 7-4 4V3l4 4-8 7" />
        </Svg>
        <WechatIcon size={22} />
        <Svg w={18} h={20}>
          <path d="M1 6h4l5-5v18l-5-5H1z" fill="#fff" stroke="#555" strokeWidth={1} />
          <path d="M14 7c2 2 2 4 0 6" />
        </Svg>
        <Svg w={18} h={16}>
          <path d="M1 13h2v3H1zM4.500 10.500h2V16h-2zM8 8h2v8H8zM11.500 4.500h2V16h-2zM15 1h2v15h-2z" fill="#fff" stroke="#555" strokeWidth={.5} />
        </Svg>
        <Svg w={20} h={20}>
          <path d="M2 1v18" strokeWidth={2} />
          <path d="M3 2c5-2 7 2 14 0v9c-6 2-9-2-14 0z" fill="#fff" stroke="#555" strokeWidth={.7} />
          <circle cx="14" cy="14" r="5" fill="#d3302a" stroke="#fff" strokeWidth={.7} />
          <path d="m12 12 4 4M16 12l-4 4" />
        </Svg>
      </div>
      <div className="w-[98px] text-center text-[15px] leading-[22px]">
        <p>14:56</p>
        <p>2020/3/31</p>
      </div>
      <button aria-label="显示桌面" className="h-full w-[14px] border-l border-[#4b5d75] bg-[#6d8099]" />
    </div>
  )
}

function Taskbar() {
  return (
    <div className="flex h-12 shrink-0 border-t border-[#41526b] bg-[#a6bedc] bg-[linear-gradient(90deg,#7a8eab_0,#8295b0_50px,#a6bedc_80px)]">
      <button aria-label="开始" className="ml-3 mr-[18px] flex items-center">
        <StartOrb />
      </button>
      <div className="flex gap-1">
        {APPS.map((a) => (
          <button
            key={a.name}
            aria-label={a.name}
            className={`flex w-[66px] items-center justify-center rounded-[3px] ${
              a.state === 'front' ? 'border border-[#4b6384] bg-[#e2ebf5]' : ''
            } ${a.state === 'open' ? 'border border-[#6a819f] bg-[linear-gradient(135deg,#cfdcec,#a9bdd6)]' : ''}`}
          >
            {a.icon}
          </button>
        ))}
      </div>
      <Tray />
    </div>
  )
}

/* ---------- things floating over the desktop ---------- */

function ShareFrame() {
  return (
    <div className="pointer-events-none absolute inset-0">
      <div className="absolute left-0 top-0 size-[120px] border-l-[6px] border-t-[6px] border-[#0ad57b]" />
      <div className="absolute right-0 top-0 size-[120px] border-r-[6px] border-t-[6px] border-[#0ad57b]" />
      <div className="absolute bottom-0 left-0 size-[120px] border-b-[6px] border-l-[6px] border-[#0ad57b]" />
      <div className="absolute bottom-0 right-0 size-[120px] border-b-[6px] border-r-[6px] border-[#0ad57b]" />
    </div>
  )
}

function MeetingBadge() {
  return (
    <div className="absolute left-1/2 top-0 flex h-[27px] w-[171px] -translate-x-1/2 items-center gap-2 bg-[#43302a]/85 pl-[7px] text-[16px] leading-6 text-[#ddd] shadow-md">
      <span className="size-[11px] rounded-full bg-[#21c45d]" />
      <span className="whitespace-nowrap font-['Roboto','Noto_Sans_CJK_SC',sans-serif]">会议号 113 784 910</span>
    </div>
  )
}

function PageDots() {
  return (
    <div className="absolute inset-x-0 bottom-[118px] flex justify-center gap-7">
      {Array.from({ length: 7 }).map((_, i) => (
        <span key={i} className={`size-5 rounded-full ${i === 0 ? 'bg-white' : 'bg-white/40'}`} />
      ))}
    </div>
  )
}

function LanguageBar() {
  return (
    <div className="absolute bottom-[160px] right-[240px] flex h-[30px] w-[90px] items-center border-t border-black bg-[linear-gradient(180deg,#aaa,#222_45%,#111)] pl-1">
      <Svg w={12} h={18}>
        <path d="M0 2h2M5 2h2M10 2h2M0 9h2M5 9h2M10 9h2M0 16h2M5 16h2M10 16h2" stroke="#050505" strokeWidth={2} />
      </Svg>
      <Svg w={20} h={17} className="ml-[6px]">
        <path d="M4 6c2-8 6 0 12-4" stroke="#888" />
        <path d="M0 6h20v10H0z" fill="#ccc" stroke="#eee" />
        <path d="M2 9h16M2 11.500h16M5 14h10" stroke="#555" />
      </Svg>
      <Svg w={18} h={18} className="ml-2">
        <circle cx="9" cy="9" r="8" fill="#1420c8" stroke="#c8c8d8" strokeWidth={1.600} />
        <path d="M6 7c0-4 6-4 6-.5C12 9 9 8.500 9 11M9 12.500v2" stroke="#fff" strokeWidth={2} />
      </Svg>
      <span className="ml-[11px] flex flex-col items-center gap-2 text-white">
        <span className="h-[2px] w-[5px] bg-white" />
        <Caret />
      </span>
    </div>
  )
}

function SpeakerTile() {
  return (
    <div className={`absolute right-[165px] top-[115px] size-[284px] bg-[#444] text-white ${CJK_FONT}`}>
      <div className="ml-[54px] mt-[54px] flex size-[176px] items-center justify-center rounded-full bg-[#006fff] text-[70px] leading-[80px]">
        建英
      </div>
      <div className="absolute inset-x-0 bottom-0 flex h-[124px] items-end bg-[linear-gradient(180deg,transparent,rgba(0,0,0,.5)_45%,rgba(0,0,0,.8))] pb-[14px] pl-[10px]">
        <svg width="41" height="47" viewBox="0 0 41 47" aria-hidden>
          <rect x="10" y="0" width="21" height="34" rx="10.500" fill="#fff" />
          <path d="M13 31h15c-4 4-11 4-15 0z" fill="#6ee06a" />
          <path d="M2.500 23c0 24 36 24 36 0" fill="none" stroke="#fff" strokeWidth="5" />
          <path d="M17.500 39h6v8h-6z" fill="#fff" />
        </svg>
        <span className="ml-[3px] whitespace-nowrap text-[41px] leading-[54px]">苏大张建英</span>
      </div>
    </div>
  )
}

function PhoneNav() {
  return (
    <nav className="flex w-[117px] shrink-0 flex-col items-center justify-center gap-[181px] bg-[#fdfdfd] text-[#c0c0c0]">
      <button aria-label="最近任务">
        <Svg w={50} h={50}><rect x="4.500" y="4" width="41" height="42" rx="2" strokeWidth={4} /></Svg>
      </button>
      <button aria-label="主屏幕">
        <Svg w={50} h={50}><circle cx="25" cy="25" r="22.500" strokeWidth={4.500} /></Svg>
      </button>
      <button aria-label="返回">
        <Svg w={50} h={50}><path d="M43 2v43L5 23.500z" strokeWidth={4.500} strokeLinejoin="round" /></Svg>
      </button>
    </nav>
  )
}

export default function App() {
  return (
    <div className={`relative flex h-screen overflow-hidden bg-black ${UI_FONT}`}>
      <div className="relative ml-[151px] mr-[152px] flex min-w-0 flex-1 flex-col bg-[#e6e6e6]">
        <header className="shrink-0 bg-[#b7472a]">
          <TitleBar />
          <TabRow />
          <Ribbon />
        </header>
        <main className="flex min-h-0 flex-1">
          <ThumbPanel />
          <div className="flex min-w-0 flex-1 flex-col">
            <Editor />
            <div className="ml-px h-[47px] shrink-0 border-t border-[#c0c0c0] pl-[13px] text-[18px] leading-10 text-[#555]">
              单击此处添加备注
            </div>
          </div>
        </main>
        <StatusBar />
        <Taskbar />
        <MeetingBadge />
        <LanguageBar />
        <PageDots />
        <ShareFrame />
        <Svg w={14} h={22} className="absolute bottom-[178px] right-0">
          <path d="M1 1v16l4-4 3 8 3-1-3-7h5z" fill="#fff" stroke="#223" strokeWidth={1.200} />
        </Svg>
      </div>
      <PhoneNav />
      <SpeakerTile />
    </div>
  )
}
